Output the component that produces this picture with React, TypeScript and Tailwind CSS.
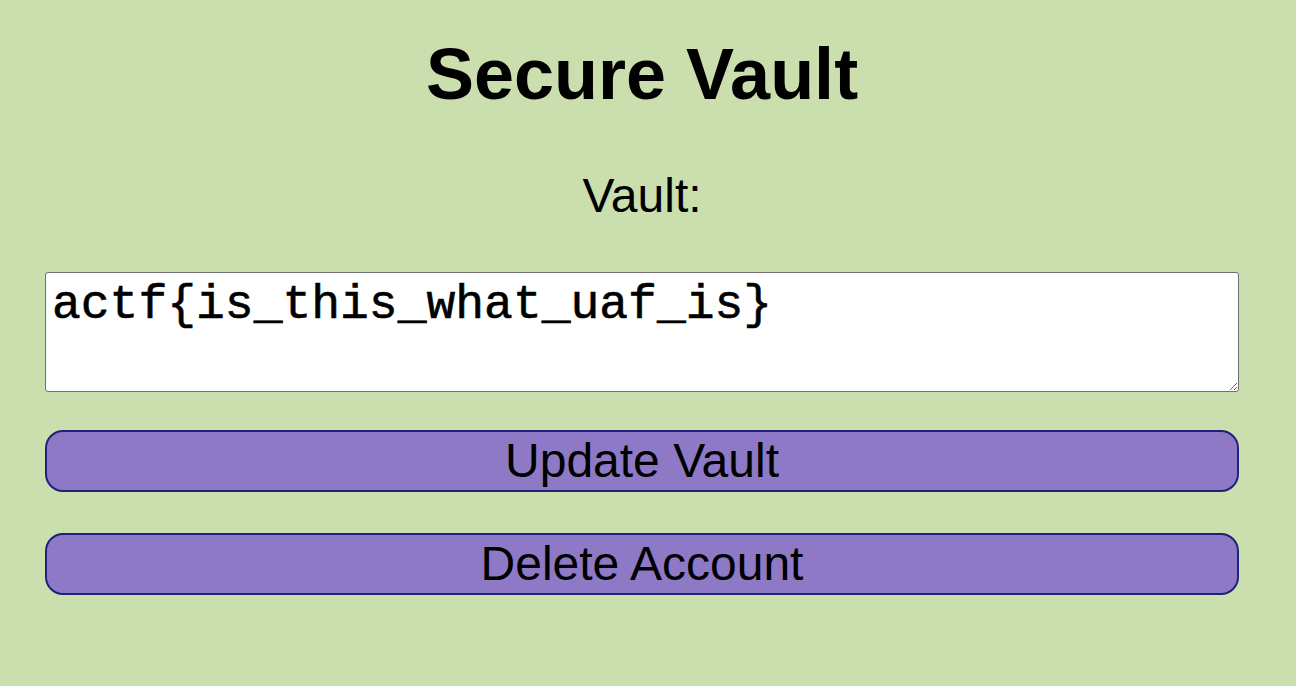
import React, { useState } from 'react';

export default function App() {
  const [vault, setVault] = useState('actf{is_this_what_uaf_is}');

  return (
    <div className="min-h-screen w-full bg-[#cbdfae] font-['Liberation_Sans',Arial,sans-serif] text-black">
      <div className="ml-[45px] w-[1194px] pt-[38px] flex flex-col items-center">
        <h1 className="text-[72px] leading-none font-bold">Secure Vault</h1>
        <label htmlFor="vault" className="mt-[62px] text-[48px] leading-none">Vault:</label>

        <textarea
          id="vault"
          value={vault}
          onChange={(e) => setVault(e.target.value)}
          className="mt-[52px] w-full h-[120px] bg-white border border-[#6f6f6f] rounded-[3px] pt-[5px] px-[6px] font-['Liberation_Mono','Courier_New',monospace] font-normal [-webkit-text-stroke:0.6px_black] text-[48px] leading-[54px] resize-y outline-none"
        />

        <button className="mt-[38px] w-full h-[62px] rounded-[18px] border-2 border-[#1e237a] bg-[#8e79c7] text-[48px] leading-none">
          Update Vault
        </button>
        <button className="mt-[41px] w-full h-[62px] rounded-[18px] border-2 border-[#1e237a] bg-[#8e79c7] text-[48px] leading-none">
          Delete Account
        </button>
      </div>
    </div>
  );
}
